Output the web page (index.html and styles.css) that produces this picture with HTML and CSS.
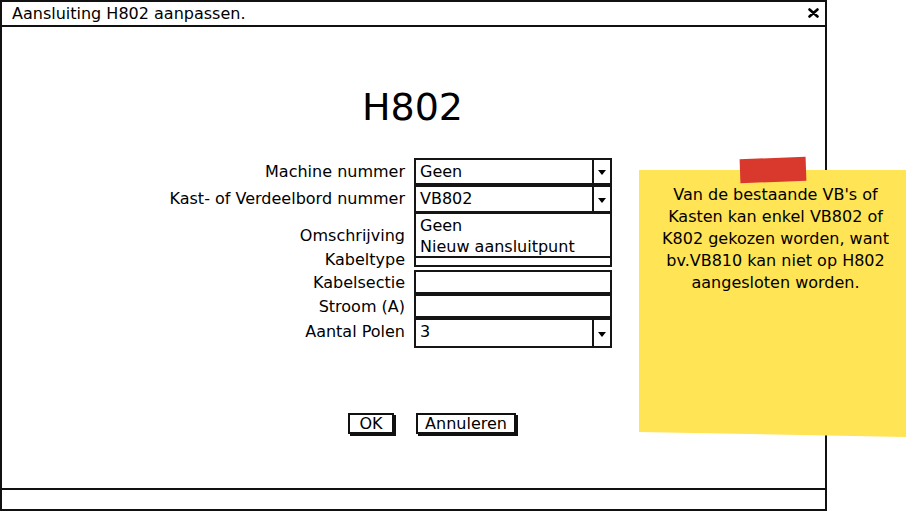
FILE: index.html
```html
<!DOCTYPE html>
<html>
<head>
<meta charset="utf-8">
<link rel="stylesheet" href="styles.css">
</head>
<body>
<div class="window">
  <div class="titlebar">
    <span class="title">Aansluiting H802 aanpassen.</span>
    <svg class="close" width="11" height="10" viewBox="0 0 11 10"><path d="M1.5 1.5 L9.5 8.5 M9.5 1.5 L1.5 8.5" stroke="#000" stroke-width="2.6" stroke-linecap="round"/></svg>
  </div>
  <h1 class="heading">H802</h1>
  <div class="form">
    <div class="row row-machine">
      <label class="label">Machine nummer</label>
      <div class="combo"><span class="value">Geen</span><span class="arrow"></span></div>
    </div>
    <div class="row row-vb">
      <label class="label">Kast- of Verdeelbord nummer</label>
      <div class="combo has-menu"><span class="value">VB802</span><span class="arrow"></span>
        <ul class="menu">
          <li>Geen</li>
          <li>Nieuw aansluitpunt</li>
        </ul>
      </div>
    </div>
    <div class="row row-text row-first">
      <label class="label label-low">Omschrijving</label>
      <div class="textbox"></div>
    </div>
    <div class="row row-text">
      <label class="label label-low">Kabeltype</label>
      <div class="textbox"></div>
    </div>
    <div class="row row-text row-sep">
      <label class="label">Kabelsectie</label>
      <div class="textbox"></div>
    </div>
    <div class="row row-text">
      <label class="label">Stroom (A)</label>
      <div class="textbox"></div>
    </div>
    <div class="row row-polen">
      <label class="label">Aantal Polen</label>
      <div class="combo"><span class="value">3</span><span class="arrow"></span></div>
    </div>
  </div>
  <div class="buttons">
    <button class="btn btn-ok">OK</button>
    <button class="btn btn-cancel">Annuleren</button>
  </div>
  <div class="statusbar"></div>
</div>
<div class="note">
  <div class="note-paper">
    <p class="note-text">Van de bestaande VB's of<br>Kasten kan enkel VB802 of<br>K802 gekozen worden, want<br>bv.VB810 kan niet op H802<br>aangesloten worden.</p>
  </div>
  <div class="tape"></div>
</div>
</body>
</html>
```
FILE: styles.css
```css
* { box-sizing: border-box; }
html, body { margin: 0; padding: 0; background: #fff; }
body {
  font-family: "DejaVu Sans", "Liberation Sans", sans-serif;
  font-size: 16px;
  color: #000;
  width: 909px;
  height: 513px;
  position: relative;
  overflow: hidden;
}
.window {
  width: 827px;
  height: 511px;
  border: 2px solid #111;
  display: flex;
  flex-direction: column;
}
.titlebar {
  height: 25px;
  flex: none;
  border-bottom: 2px solid #111;
  display: flex;
  align-items: center;
  justify-content: space-between;
  padding: 0 6px 0 10px;
}
.title { line-height: 20px; }
.close { display: block; margin-top: -2px; }
.heading {
  margin: 58px 0 0 -2px;
  font-size: 38px;
  font-weight: normal;
  line-height: 44px;
  text-align: center;
}
.form {
  margin-top: 29px;
  display: flex;
  flex-direction: column;
}
.row {
  display: flex;
  align-items: center;
  gap: 9px;
}
.label {
  width: 403px;
  text-align: right;
  white-space: nowrap;
}
.label-low { padding-top: 9px; }
.label-up { padding-bottom: 3px; }
.row-machine { height: 27px; }
.row-vb { height: 28px; }
.row-vb .label { padding-bottom: 2px; }
.row-text { height: 24px; }
.row-first { margin-top: 6px; }
.row-sep { margin-top: 3px; }
.row-polen { height: 30px; }
.row-polen .label, .row-polen .value { padding-bottom: 3px; }
.combo, .textbox {
  width: 198px;
  height: 100%;
  border: 2px solid #151515;
  background: #fff;
}
.combo {
  display: flex;
  align-items: center;
  position: relative;
}
.value {
  flex: 1;
  padding-left: 4px;
}
.row-vb .value { padding-bottom: 2px; }
.arrow {
  width: 18px;
  height: 100%;
  border-left: 2px solid #151515;
  display: flex;
  align-items: center;
  justify-content: center;
}
.arrow::after {
  content: "";
  border-left: 4px solid transparent;
  border-right: 4px solid transparent;
  border-top: 5px solid #000;
  margin-top: 2px;
}
.menu {
  position: absolute;
  left: -2px;
  top: calc(100% + 1px);
  width: 198px;
  height: 46px;
  margin: 0;
  padding: 1px 0 0 4px;
  list-style: none;
  background: #fff;
  border: 2px solid #151515;
  z-index: 2;
  line-height: 21px;
}
.buttons {
  margin-top: 65px;
  padding-left: 346px;
  display: flex;
  gap: 22px;
}
.btn {
  font-family: inherit;
  font-size: 16px;
  color: #000;
  background: #fff;
  border: 2px solid #111;
  box-shadow: 2px 2px 0 #111;
  height: 21px;
  padding: 0;
  line-height: 17px;
  border-radius: 0;
}
.btn-ok { width: 46px; }
.btn-cancel { width: 100px; }
.statusbar {
  margin-top: auto;
  height: 21px;
  border-top: 2px solid #111;
  flex: none;
}
.note {
  position: absolute;
  left: 639px;
  top: 170px;
  width: 267px;
  height: 267px;
}
.note-paper {
  width: 100%;
  height: 100%;
  background: #ffe455;
  clip-path: polygon(0 0, 100% 0, 100% 100%, 0 262px);
}
.tape {
  position: absolute;
  left: 101px;
  top: -12px;
  width: 66px;
  height: 24px;
  background: #d9382d;
  transform: rotate(-2deg);
}
.note-text {
  margin: 0;
  padding: 14px 0 0 6px;
  text-align: center;
  line-height: 22px;
  font-size: 16px;
}
```
